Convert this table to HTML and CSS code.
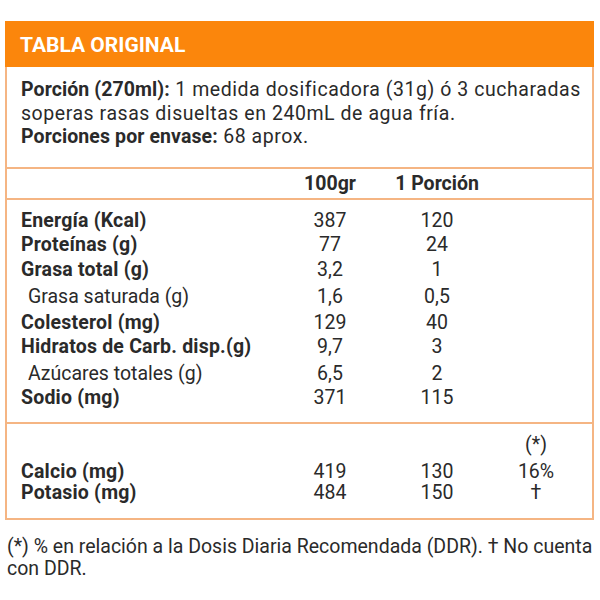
FILE: index.html
```html
<!DOCTYPE html>
<html lang="es">
<head>
<meta charset="utf-8">
<title>Tabla original</title>
<link rel="stylesheet" href="styles.css">
</head>
<body>
<div class="page">
  <div class="label">
    <div class="label-head">TABLA ORIGINAL</div>
    <div class="serving">
      <p><b>Porción (270ml):</b> 1 medida dosificadora (31g) ó 3 cucharadas soperas rasas disueltas en 240mL de agua fría.</p>
      <p><b>Porciones por envase:</b> 68 aprox.</p>
    </div>
    <div class="grid col-head">
      <span></span><span class="num b">100gr</span><span class="num b">1 Porción</span><span></span>
    </div>
    <div class="grid nutrients">
      <span class="name b">Energía (Kcal)</span><span class="num">387</span><span class="num">120</span><span></span>
      <span class="name b">Proteínas (g)</span><span class="num">77</span><span class="num">24</span><span></span>
      <span class="name b">Grasa total (g)</span><span class="num">3,2</span><span class="num">1</span><span></span>
      <span class="name sub sub-a">Grasa saturada (g)</span><span class="num sub sub-a">1,6</span><span class="num sub sub-a">0,5</span><span class="sub sub-a"></span>
      <span class="name b">Colesterol (mg)</span><span class="num">129</span><span class="num">40</span><span></span>
      <span class="name b">Hidratos de Carb. disp.(g)</span><span class="num">9,7</span><span class="num">3</span><span></span>
      <span class="name sub">Azúcares totales (g)</span><span class="num sub">6,5</span><span class="num sub">2</span><span class="sub"></span>
      <span class="name b">Sodio (mg)</span><span class="num">371</span><span class="num">115</span><span></span>
    </div>
    <div class="grid minerals">
      <span class="star-row"></span><span class="star-row"></span><span class="star-row"></span><span class="num star-row">(*)</span>
      <span class="name b">Calcio (mg)</span><span class="num">419</span><span class="num">130</span><span class="num">16%</span>
      <span class="name b">Potasio (mg)</span><span class="num">484</span><span class="num">150</span><span class="num">†</span>
    </div>
  </div>
  <p class="footnote">(*) % en relación a la Dosis Diaria Recomendada (DDR). † No cuenta con DDR.</p>
</div>
</body>
</html>
```
FILE: styles.css
```css
html, body {
  margin: 0;
  padding: 0;
  background: #ffffff;
}
body {
  font-family: Roboto, "Liberation Sans", sans-serif;
  color: #2a2a2a;
}
.page {
  padding: 21px 0 0 5px;
  width: 589px;
}
.label {
  border: 2px solid #f5b583;
  border-top: none;
}
.label-head {
  background: #fb860c;
  color: #ffffff;
  font-weight: 700;
  font-size: 21px;
  height: 46px;
  line-height: 48px;
  margin: 0 -2px;
  padding-left: 15px;
}
.b { font-weight: 700; }
.serving {
  padding: 11px 4px 18px 14px;
  font-size: 19.5px;
  line-height: 23.5px;
  letter-spacing: 0.55px;
  border-bottom: 2px solid #f5b583;
}
.serving b { letter-spacing: 0.1px; }
.serving p { margin: 0; }
.grid {
  display: grid;
  grid-template-columns: 262px 94px 120px 78px;
  padding-left: 14px;
  font-size: 19.5px;
}
.name.b { letter-spacing: 0.2px; }
.num { text-align: center; }
.col-head {
  height: 29px;
  line-height: 29px;
  border-bottom: 2px solid #f5b583;
}
.nutrients {
  line-height: 24.5px;
  padding-top: 9px;
  padding-bottom: 11px;
  border-bottom: 2px solid #f5b583;
}
.nutrients .sub { padding-top: 2px; }
.nutrients .sub-a { padding-top: 3px; padding-bottom: 1px; }
.name.sub { padding-left: 7px; }
.minerals {
  line-height: 21.5px;
  padding-top: 10px;
  padding-bottom: 14px;
}
.star-row { height: 27px; }
.footnote {
  margin: 0;
  padding: 16px 0 0 2px;
  font-size: 19.5px;
  line-height: 22px;
}
```
